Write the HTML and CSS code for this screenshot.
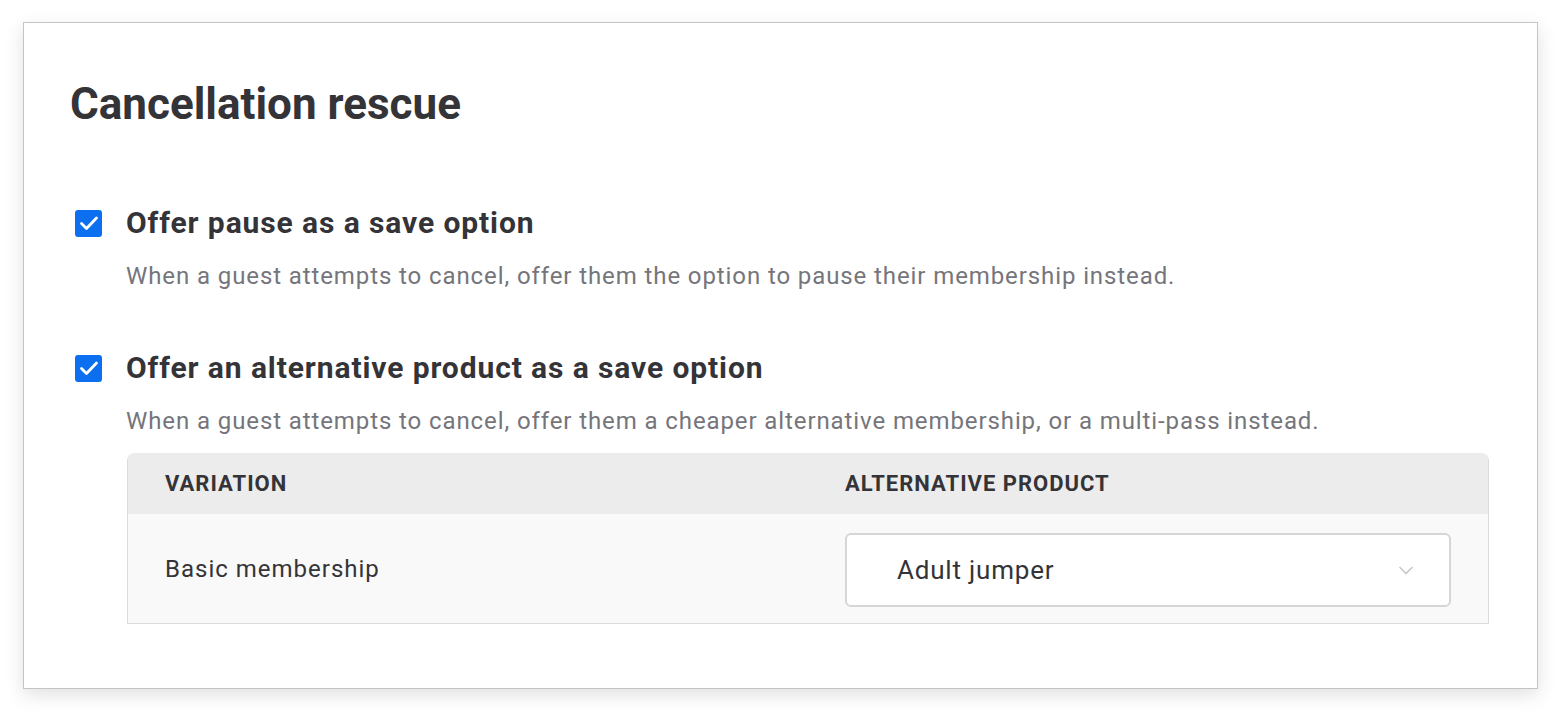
FILE: index.html
```html
<!DOCTYPE html>
<html lang="en">
<head>
  <meta charset="UTF-8" />
  <meta name="viewport" content="width=device-width, initial-scale=1" />
  <title>Cancellation rescue</title>
  <link rel="stylesheet" href="styles.css">
</head>
<body>

  <div class="card">
    <h1 class="card-title">Cancellation rescue</h1>

    <div class="option">
      <label class="option-head">
        <span class="checkbox">
          <svg viewBox="0 0 24 24" width="24" height="24">
            <path d="M4.5 12.5l5 5L19.5 7" fill="none" stroke="#fff" stroke-width="2.8" stroke-linecap="round" stroke-linejoin="round"/>
          </svg>
        </span>
        <span class="option-title">Offer pause as a save option</span>
      </label>
      <p class="option-desc">When a guest attempts to cancel, offer them the option to pause their membership instead.</p>
    </div>

    <div class="option">
      <label class="option-head">
        <span class="checkbox">
          <svg viewBox="0 0 24 24" width="24" height="24">
            <path d="M4.5 12.5l5 5L19.5 7" fill="none" stroke="#fff" stroke-width="2.8" stroke-linecap="round" stroke-linejoin="round"/>
          </svg>
        </span>
        <span class="option-title">Offer an alternative product as a save option</span>
      </label>
      <p class="option-desc">When a guest attempts to cancel, offer them a cheaper alternative membership, or a multi-pass instead.</p>

      <div class="alt-table">
        <div class="alt-row alt-header">
          <div class="alt-cell">Variation</div>
          <div class="alt-cell">Alternative product</div>
        </div>
        <div class="alt-row alt-body">
          <div class="alt-cell">Basic membership</div>
          <div class="alt-cell">
            <div class="select">
              <span>Adult jumper</span>
              <svg viewBox="0 0 18 18" width="18" height="18">
                <path d="M2.5 6l6.5 6.5L15.5 6" fill="none" stroke="#c8c8c8" stroke-width="1.6"/>
              </svg>
            </div>
          </div>
        </div>
      </div>
    </div>
  </div>

</body>
</html>
```

FILE: styles.css
```css
* {
  box-sizing: border-box;
  margin: 0;
  padding: 0;
  font-family: Roboto, 'Liberation Sans', sans-serif;
}
body {
  background-color: #ffffff;
  color: #343438;
  padding: 22px 24px 24px 23px;
}
.card {
  background: #fff;
  border: 1px solid #c4c4c4;
  box-shadow: 0 6px 18px rgb(0 0 0 / 0.12);
  padding: 53px 48px 65px 46px;
  height: 667px;
}
.card-title {
  font-size: 44px;
  font-weight: 700;
  line-height: 56px;
  color: #343438;
  margin-bottom: 71px;
}
.option {
  margin-bottom: 57px;
}
.option:last-child {
  margin-bottom: 0;
}
.option-head {
  display: flex;
  align-items: center;
  gap: 24px;
  padding-left: 5px;
}
.checkbox {
  width: 27px;
  height: 27px;
  border-radius: 3px;
  background-color: #0b6ff0;
  display: flex;
  align-items: center;
  justify-content: center;
  flex-shrink: 0;
}
.option-title {
  font-size: 30px;
  font-weight: 700;
  letter-spacing: 0.9px;
  line-height: 40px;
  color: #343438;
}
.option-desc {
  margin-top: 18px;
  margin-left: 56px;
  font-size: 24px;
  letter-spacing: 0.9px;
  line-height: 30px;
  color: #75757b;
}
.alt-table {
  margin-top: 17px;
  margin-left: 57px;
  border: 1px solid #dcdcdc;
  border-top: none;
  border-radius: 8px 8px 0 0;
  overflow: hidden;
}
.alt-row {
  display: grid;
  grid-template-columns: 1fr 1fr;
}
.alt-cell {
  padding: 0 37px;
  display: flex;
  align-items: center;
}
.alt-header {
  background-color: #ececec;
  height: 61px;
}
.alt-header .alt-cell {
  font-size: 22px;
  font-weight: 700;
  letter-spacing: 1px;
  text-transform: uppercase;
  color: #343438;
}
.alt-body {
  background-color: #f9f9f9;
  height: 109px;
}
.alt-body .alt-cell {
  font-size: 24px;
  letter-spacing: 1px;
  color: #343438;
}
.select {
  width: 100%;
  height: 74px;
  margin-top: 2px;
  background: #fff;
  border: 2px solid #d6d6d6;
  border-radius: 6px;
  display: flex;
  align-items: center;
  justify-content: space-between;
  padding: 0 34px 0 50px;
  font-size: 26px;
  letter-spacing: 0.8px;
}
```
